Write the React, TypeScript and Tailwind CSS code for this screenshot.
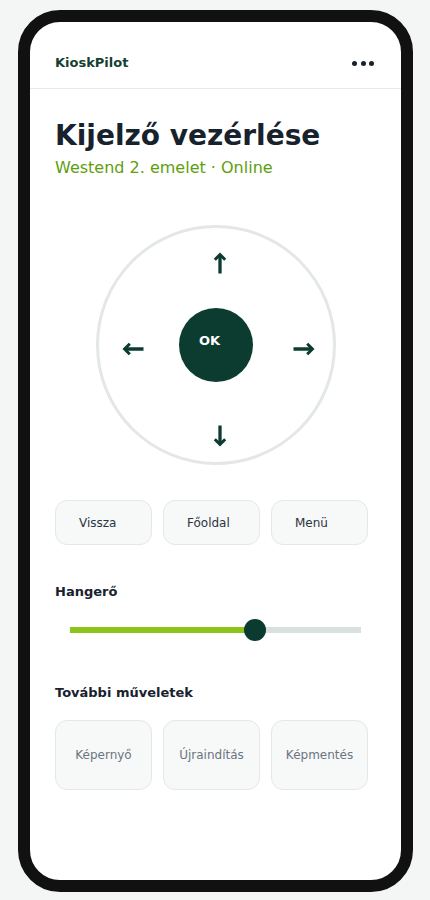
import { useState } from "react";

const quick = ["Vissza", "Főoldal", "Menü"];
const more = ["Képernyő", "Újraindítás", "Képmentés"];

function Arrow({ rot }: { rot: string }) {
  return (
    <svg width="24" height="24" viewBox="0 0 24 24" className={rot} fill="none" stroke="#0c3b30" strokeLinejoin="miter">
      <path d="M12 22.5V4" strokeWidth="3.3" />
      <path d="M6.8 8.8L12 3.6L17.2 8.8" strokeWidth="3" />
    </svg>
  );
}

export default function App() {
  const [volume] = useState(63.6);

  return (
    <div className="h-[900px] bg-[#f4f6f5] pt-[10px] font-['DejaVu_Sans',sans-serif]">
      <div className="ml-[18px] h-[882px] w-[395px] overflow-hidden rounded-[42px] border-[12px] border-[#111111] bg-white">
        <header className="flex items-center justify-between border-b border-[#e6eae9] px-[25px] pt-[32px] pb-[16px]">
          <span className="text-[13px] leading-[18px] font-bold text-[#153f33]">KioskPilot</span>
          <div className="mr-[2px] flex gap-[3.5px]">
            <span className="h-[5px] w-[5px] rounded-full bg-[#18222d]" />
            <span className="h-[5px] w-[5px] rounded-full bg-[#18222d]" />
            <span className="h-[5px] w-[5px] rounded-full bg-[#18222d]" />
          </div>
        </header>

        <main className="px-[25px]">
          <h1 className="mt-[30px] text-[28px] leading-[34px] font-bold text-[#18222d]">Kijelző vezérlése</h1>
          <p className="mt-[4px] text-[16px] leading-[22px] text-[#5e9e0e]">Westend 2. emelet · Online</p>

          {/* d-pad */}
          <div className="relative mx-auto mt-[46px] flex h-[240px] w-[240px] items-center justify-center rounded-full border-[3px] border-[#e3e8e6]">
            <button className="absolute top-[15px] left-[101px] flex h-[40px] w-[40px] items-center justify-center">
              <Arrow rot="" />
            </button>
            <button className="absolute top-[101px] left-[14px] flex h-[40px] w-[40px] items-center justify-center">
              <Arrow rot="-rotate-90" />
            </button>
            <button className="absolute top-[101px] left-[185px] flex h-[40px] w-[40px] items-center justify-center">
              <Arrow rot="rotate-90" />
            </button>
            <button className="absolute top-[188px] left-[101px] flex h-[40px] w-[40px] items-center justify-center">
              <Arrow rot="rotate-180" />
            </button>
            <button className="flex h-[74px] w-[74px] items-center justify-center rounded-full bg-[#0c3b30] pr-[12px] pb-[9px] text-[13px] font-bold text-white">
              OK
            </button>
          </div>

          <div className="mt-[35px] grid w-[313px] grid-cols-3 gap-[11px]">
            {quick.map((q) => (
              <button key={q} className="h-[45px] rounded-[12px] border border-[#e4e8e6] bg-[#f7f8f8] pl-[23px] text-left text-[12px] text-[#2a3440]">
                {q}
              </button>
            ))}
          </div>

          <h2 className="mt-[38px] text-[13px] leading-[18px] font-bold text-[#18222d]">Hangerő</h2>
          <div className="relative mt-[18px] ml-[15px] flex h-[22px] w-[291px] items-center">
            <div className="h-[6px] w-full bg-[#d9e1dd]">
              <div className="h-full bg-[#8cc51a]" style={{ width: `${volume}%` }} />
            </div>
            <div
              className="absolute top-0 h-[22px] w-[22px] -translate-x-1/2 rounded-full bg-[#0b3b30]"
              style={{ left: `${volume}%` }}
            />
          </div>

          <h2 className="mt-[43px] text-[13px] leading-[18px] font-bold text-[#18222d]">További műveletek</h2>
          <div className="mt-[18px] grid w-[313px] grid-cols-3 gap-[11px]">
            {more.map((m) => (
              <button key={m} className="flex h-[70px] items-center justify-center rounded-[12px] border border-[#e4e8e6] bg-[#f7f8f8] px-[16px] text-[12px] whitespace-nowrap text-[#6b7580]">
                {m}
              </button>
            ))}
          </div>
        </main>
      </div>
    </div>
  );
}
